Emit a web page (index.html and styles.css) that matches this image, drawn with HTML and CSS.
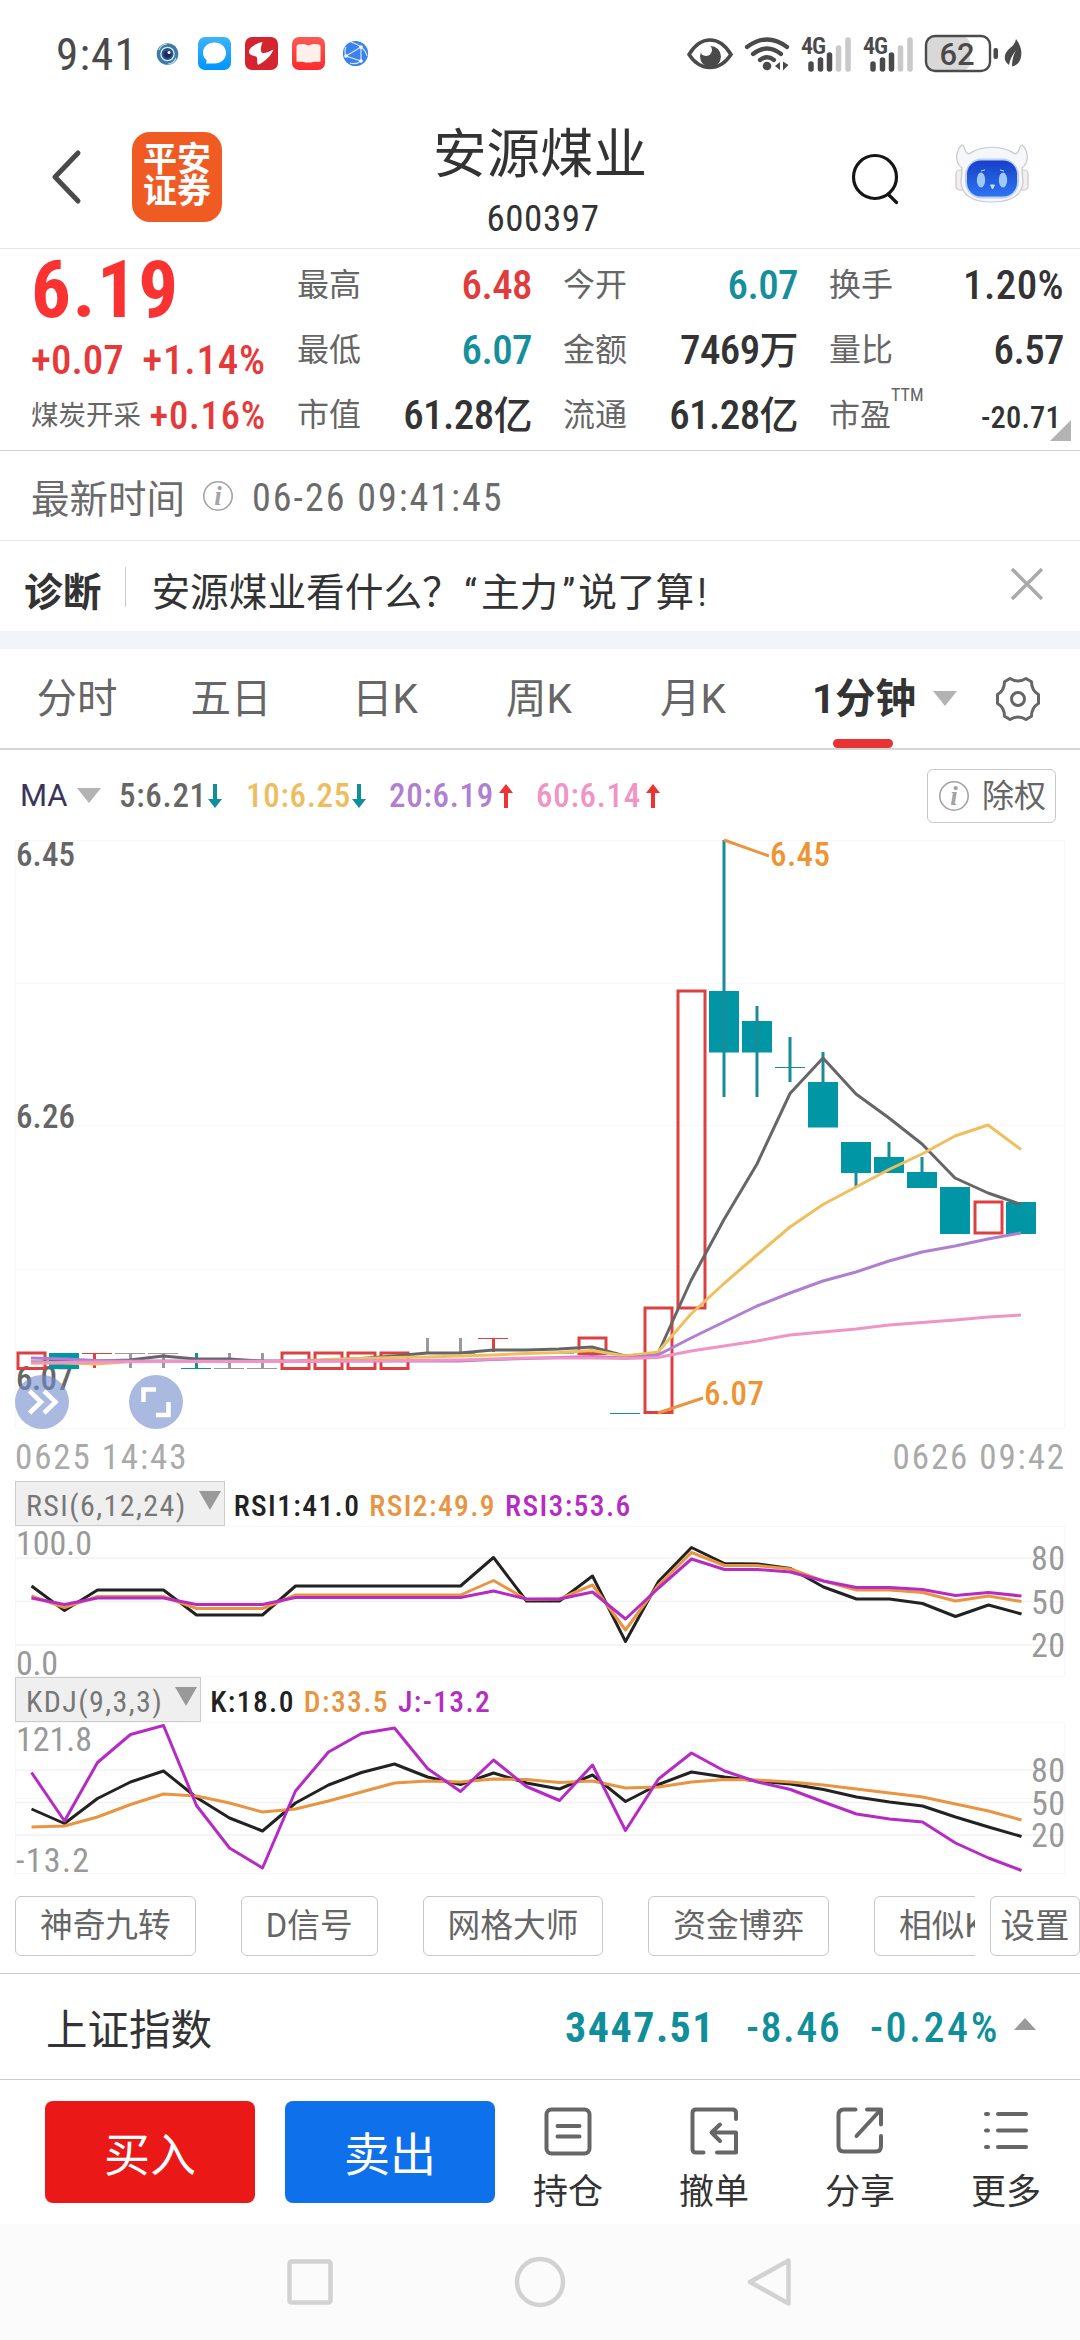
FILE: index.html
```html
<!DOCTYPE html>
<html lang="zh-CN">
<head>
    <meta charset="UTF-8">
    <meta name="viewport" content="width=device-width, initial-scale=1.0">
    <title>安源煤业 600397</title>
    <link rel="stylesheet" href="styles.css">
</head>
<body>
    <div class="status-bar">
        <span class="clock">9:41</span>
        <!-- Notification icons -->
        <svg class="notify-icons" viewBox="150 30 230 48" width="230" height="48">
            <defs>
                <linearGradient id="chatBg" x1="0" y1="0" x2="0" y2="1"><stop offset="0" stop-color="#3db4f8"/><stop offset="1" stop-color="#0095ff"/></linearGradient>
                <linearGradient id="bookBg" x1="0" y1="0" x2="0" y2="1"><stop offset="0" stop-color="#fb5a55"/><stop offset="1" stop-color="#fb2a2c"/></linearGradient>
            </defs>
            <circle cx="167.5" cy="54" r="10.8" fill="#3a7ea6"/>
            <circle cx="167.5" cy="54" r="6.6" fill="#2a4f86" stroke="#d9eaf4" stroke-width="1.3"/>
            <path d="M159 50a9 9 0 0 1 8-6M176 58a9 9 0 0 1-8 6" fill="none" stroke="#bcdcec" stroke-width="1.2"/>
            <circle cx="167.5" cy="54.5" r="3.3" fill="#16285c"/>
            <circle cx="169" cy="52.5" r="1.5" fill="#fff"/>
            <rect x="198" y="37" width="33" height="33" rx="7" fill="url(#chatBg)"/>
            <path d="M214.5 42.5c6.600 0 11.500 4.500 11.500 10.400s-4.900 10.500-11.500 10.500h-8.300l.5-3.200c-2.300-1.900-3.700-4.300-3.700-7.300 0-5.900 4.900-10.400 11.500-10.400z" fill="#fff"/>
            <rect x="245" y="37" width="33" height="33" rx="7" fill="#d3242f"/>
            <path d="M262.5 42c-6 1-13.500 5.500-13.500 10 0 3 4 3.500 7 4.500 2 1 .5 5 2 8.500 6-2.500 13.500-9.500 15.500-15.500-4 2-8 3.800-10.500 3.500-2.500-.5-3-4-.5-11z" fill="#fff"/>
            <rect x="292" y="37" width="33" height="33" rx="7" fill="url(#bookBg)"/>
            <path d="M298 44.5c4-1 7.500-.5 10.500 1 3-1.500 6.500-2 10.500-1l1.500 1.500v15.500c-4 .5-7-.5-9 1h-6c-2-1.500-5-.5-9-1V46z" fill="#fff0ec"/>
            <circle cx="355.5" cy="53.5" r="12.6" fill="#3b82ec"/>
            <path d="M346 56l15-9v14zM361 47q-4-3-10-5M361 61q-5 4-11 2M346 56q-2-5 0-9M361 47q5 4 6 9" fill="none" stroke="#d7e6ff" stroke-width="1.2"/>
            <circle cx="346" cy="56" r="1.8" fill="#fff"/><circle cx="361" cy="47" r="1.8" fill="#fff"/><circle cx="361" cy="61" r="1.8" fill="#fff"/>
        </svg>
        <!-- System icons -->
        <svg class="system-icons" viewBox="685 30 340 48" width="340" height="48">
            <path d="M689 54.5c6-10 13.500-14.500 21-14.500s15 4.500 21 14.500c-6 9-13.500 13-21 13s-15-4-21-13z" fill="none" stroke="#4a4a4a" stroke-width="3.5"/>
            <circle cx="710.5" cy="56.5" r="10.5" fill="#4a4a4a"/>
            <circle cx="706" cy="50" r="6" fill="#fff"/>
            <g fill="none" stroke="#4a4a4a" stroke-width="4.2" stroke-linecap="round">
                <path d="M747 47q20-15 40 0M753 54q14-11 28 0M760 60q7-5.500 14 0"/>
            </g>
            <circle cx="767" cy="66" r="4.300" fill="#4a4a4a"/>
            <path d="M775 66l5-4v8zM783 61.500v9l2-2 3.500-3.500z" fill="#4a4a4a"/>
            <g class="signal">
                <text x="801" y="53.500" textLength="25">4G</text>
                <path d="M811 64v5M820.500 60v9M829.500 55v14"/>
                <path class="weak" d="M838.500 48v21M848 40v29"/>
                <text x="863" y="53.500" textLength="25">4G</text>
                <path d="M873 64v5M882.500 60v9M891.500 55v14"/>
                <path class="weak" d="M900.500 48v21M910 40v29"/>
            </g>
            <rect x="927" y="37" width="43" height="33" rx="7" fill="#d8d8d8"/>
            <rect x="926" y="36" width="64" height="35" rx="9" fill="none" stroke="#4a4a4a" stroke-width="2.4"/>
            <rect x="993.5" y="48" width="4.5" height="11" rx="2" fill="#4a4a4a"/>
            <text class="battery-level" x="957" y="64.5" text-anchor="middle">62</text>
            <path d="M1016 39c5 7 6 12 5 18-1 5-4 8.500-9 9.500 0-6 1-11 4-16-4 5-6 9-7 14.500-6-4-5-11-1-15 3-3 7-5 8-11z" fill="#4a4a4a"/>
        </svg>
    </div>

    <header class="header">
        <svg class="back" width="32" height="56" viewBox="0 0 32 56"><path d="M28 4L5 28l23 24" fill="none" stroke="#4a4a4a" stroke-width="5" stroke-linecap="round" stroke-linejoin="round"/></svg>
        <div class="logo">平安<br>证券</div>
        <div class="title">
            <h1>安源煤业</h1>
            <p>600397</p>
        </div>
        <svg class="search" width="52" height="54" viewBox="0 0 52 54"><g fill="none" stroke="#151515" stroke-width="3.2" stroke-linecap="round"><circle cx="26" cy="25" r="21.5"/><path d="M40 43l7.500 7.500"/></g></svg>
        <svg class="robot" width="76" height="62" viewBox="0 0 76 62">
            <defs><linearGradient id="face" x1="0" y1="0" x2="0" y2="1"><stop offset="0" stop-color="#1740c8"/><stop offset="1" stop-color="#2e74f0"/></linearGradient></defs>
            <g stroke="#c6c8cf" stroke-width="1.2">
                <rect x="2" y="27" width="9" height="20" rx="4" fill="#f6eeee"/><rect x="65" y="27" width="9" height="20" rx="4" fill="#f6eeee"/>
                <path d="M8 2c-6 5-8 17 0 23l-1 14c1 14 12 20 31 20s30-6 31-20l-1-14c8-6 6-18 0-23-3 0-2 8-7 9-12-9-34-9-46 0-5-1-4-9-7-9z" fill="#f6f7fa"/>
            </g>
            <rect x="11" y="15.5" width="54" height="40" rx="17" fill="#b9d0fa"/>
            <rect x="13" y="17.5" width="50" height="36" rx="14" fill="url(#face)"/>
            <ellipse cx="27" cy="37" rx="4.200" ry="7.500" fill="#9fc9fb"/><ellipse cx="49" cy="37" rx="4.200" ry="7.500" fill="#9fc9fb"/>
            <path d="M36.500 42h4l-2 4zM27 28l4-1M46 27l4 1" fill="#c4defc" stroke="#c4defc" stroke-width="1"/>
        </svg>
    </header>

    <section class="quote">
        <div class="quote-main">
            <div class="price">6.19</div>
            <div class="change"><span>+0.07</span><span>+1.14%</span></div>
            <div class="sector"><em>煤炭开采</em><span>+0.16%</span></div>
        </div>
        <div class="cell"><label>最高</label><b class="up">6.48</b></div>
        <div class="cell"><label>今开</label><b class="down">6.07</b></div>
        <div class="cell"><label>换手</label><b class="rate">1.20%</b></div>
        <div class="cell"><label>最低</label><b class="down">6.07</b></div>
        <div class="cell"><label>金额</label><b>7469<small>万</small></b></div>
        <div class="cell"><label>量比</label><b>6.57</b></div>
        <div class="cell"><label>市值</label><b>61.28<small>亿</small></b></div>
        <div class="cell"><label>流通</label><b>61.28<small>亿</small></b></div>
        <div class="cell pe"><label>市盈<sup>TTM</sup></label><b>-20.71</b></div>
        <i class="corner"></i>
    </section>

    <div class="time-row">
        <span class="time-label">最新时间</span>
        <svg class="info" width="32" height="32" viewBox="0 0 32 32"><circle cx="16" cy="16" r="14.2"/><text x="16" y="25" text-anchor="middle">i</text></svg>
        <span class="time-value">06-26 09:41:45</span>
    </div>

    <div class="diagnose">
        <strong>诊断</strong>
        <i class="divider"></i>
        <span>安源煤业看什么？<i class="open">“</i>主力<i class="shut">”</i>说了算<i class="bang">!</i></span>
        <svg class="close" width="36" height="36" viewBox="0 0 36 36"><path d="M3 3l30 30M33 3L3 33" stroke="#aaa" stroke-width="3.5"/></svg>
    </div>

    <nav class="tabs">
        <a>分时</a>
        <a>五日</a>
        <a>日K</a>
        <a>周K</a>
        <a>月K</a>
        <a class="active">1分钟</a>
        <i class="caret"></i>
        <svg class="gear" width="46" height="46" viewBox="0 0 46 46">
            <g fill="none" stroke="#666" stroke-width="3">
                <path stroke-linejoin="round" d="M15 2.500Q23 7.500 31 2.500L36.500 5.700Q36.500 14.500 43.500 18.500V27.500Q36.500 31.500 36.500 40.300L31 43.500Q23 38.500 15 43.500L9.500 40.300Q9.500 31.500 2.500 27.500V18.500Q9.500 14.500 9.500 5.700Z"/>
                <circle cx="23" cy="23" r="6.5"/>
            </g>
        </svg>
    </nav>

    <div class="ma-row">
        <span class="ma-name">MA</span><i class="caret"></i>
        <span class="ma5">5:6.21<svg class="arrow fall" viewBox="0 0 14 24"><path d="M5 0h4v15h5l-7 9-7-9h5z"/></svg></span>
        <span class="ma10">10:6.25<svg class="arrow fall" viewBox="0 0 14 24"><path d="M5 0h4v15h5l-7 9-7-9h5z"/></svg></span>
        <span class="ma20">20:6.19<svg class="arrow rise" viewBox="0 0 14 24"><path d="M5 24h4V9h5L7 0 0 9h5z"/></svg></span>
        <span class="ma60">60:6.14<svg class="arrow rise" viewBox="0 0 14 24"><path d="M5 24h4V9h5L7 0 0 9h5z"/></svg></span>
        <button class="rights">
            <svg class="info" width="32" height="32" viewBox="0 0 32 32"><circle cx="16" cy="16" r="14.2"/><text x="16" y="25" text-anchor="middle">i</text></svg>
            除权
        </button>
    </div>

    <!-- Candles, one every 33px -->
    <svg class="chart" width="1080" height="593" viewBox="0 838 1080 593">
        <path class="grid" d="M15.500 840.500H1064.500V1428.500H15.500zM15 983.500H1064M15 1125.500H1064M15 1269.500H1064"/>
        <g class="axis dark">
            <text x="16" y="866" textLength="59">6.45</text>
            <text x="16" y="1128" textLength="59">6.26</text>
            <text x="16" y="1390" textLength="57">6.07</text>
        </g>
        <g class="flat">
            <path class="s-red" d="M94.500 1353v15"/>
            <path d="M130.500 1353v15M163.500 1353v15M229.500 1353v15M262.500 1353v15M427.500 1338v15M460.500 1338v15"/>
            <path class="hair" d="M115 1353.500h30M148 1353.500h30M214 1368.500h30M247 1368.500h30M412 1353.500h30M445 1353.500h30M544 1353.500h30"/>
            <path class="s-teal" d="M196.500 1353v15"/>
            <path class="hair s-teal" d="M181 1368.500h30M511 1353.500h30M610 1413.500h30"/>
            <path class="s-red" d="M493.500 1338v14"/>
            <path class="hair s-red" d="M82 1353.500h30M478 1338.500h30"/>
        </g>
        <g class="candle-up">
            <rect x="18" y="1353" width="27" height="15.5"/>
            <rect x="282" y="1353" width="27" height="15.5"/>
            <rect x="315" y="1353" width="27" height="15.5"/>
            <rect x="348" y="1353" width="27" height="15.5"/>
            <rect x="381" y="1353" width="27" height="15.5"/>
            <rect x="579" y="1338" width="27" height="15.5"/>
            <rect x="645" y="1308" width="27" height="104.5"/>
            <rect x="678" y="991" width="27" height="317"/>
            <rect x="975" y="1202" width="27" height="31"/>
        </g>
        <g class="candle-down">
            <rect x="49" y="1353" width="30" height="16"/>
            <rect x="709" y="991" width="30" height="61.5"/>
            <rect x="742" y="1021" width="30" height="31.5"/>
            <rect x="808" y="1082" width="30" height="45.5"/>
            <rect x="841" y="1142" width="30" height="31"/>
            <rect x="874" y="1157" width="30" height="16"/>
            <rect x="907" y="1172" width="30" height="16"/>
            <rect x="940" y="1187" width="30" height="47"/>
            <rect x="1006" y="1202" width="30" height="32"/>
            <path d="M724 840V1097M757 1006V1097M790 1037V1082M823 1052V1082M856 1172V1187M889 1142V1157M922 1157V1172"/>
            <path class="hair" d="M775 1067.500h30"/>
        </g>
        <g class="lines" transform="translate(31 0) scale(33 1)">
            <polyline stroke="#666" points="0,1362 1,1362 2,1361 3,1360 4,1356 5,1359 6,1359 7,1361 8,1361.5 9,1360 10,1358.5 11,1356 12,1353 13,1353 14,1350 15,1350 16,1349 17,1347 18,1356 19,1353.5 20,1280.5 21,1219.5 22,1164 23,1093.5 24,1058 25,1094 26,1118 27,1144 28,1178 29,1193 30,1204.5"/>
            <polyline stroke="#efbf5d" points="0,1363 1,1363 2,1364 3,1361.5 7,1361.5 8,1361 9,1359.5 10,1358.5 11,1357.5 12,1357 13,1356 14,1355 15,1353.5 16,1352.5 17,1350.5 18,1356 19,1352 20,1314 21,1283.5 22,1255 23,1227 24,1204.5 25,1187 26,1169.5 27,1154 28,1136 29,1125 30,1149.5"/>
            <polyline stroke="#b07fd2" points="0,1358 1,1359 2,1360.5 3,1361 13,1361 14,1359.5 15,1358.5 16,1357.5 17,1356.5 18,1358 19,1355 20,1338 21,1322 22,1306 23,1293 24,1281 25,1272 26,1261 27,1252 28,1246 29,1239 30,1233"/>
            <polyline stroke="#ef94c5" points="0,1363 2,1362 4,1361.5 8,1361.5 13,1360 14,1359 15,1358 16,1358 17,1358 18,1358.5 19,1357.5 20,1351 21,1346 22,1341 23,1335 24,1332 25,1329 26,1325 27,1322.5 28,1320 29,1317 30,1315"/>
        </g>
        <g class="callout">
            <path d="M724 840l45 16M658 1413l45-15"/>
            <text x="770" y="866" textLength="60">6.45</text>
            <text x="704" y="1405" textLength="60">6.07</text>
        </g>
        <g class="float-btn">
            <circle cx="42" cy="1402" r="27"/>
            <path d="M29.500 1391l11.500 11-11.500 11M44 1391l11.500 11-11.500 11"/>
            <circle cx="156" cy="1402" r="27"/>
            <path d="M156 1389.500h-12.500v12.500M156 1415h12.500v-13"/>
        </g>
    </svg>
    <div class="dates"><span>0625 14:43</span><span>0626 09:42</span></div>

    <div class="indicator-head">
        <button class="picker">RSI(6,12,24)<i></i></button>
        <span class="c-black">RSI1:41.0</span>
        <span class="c-orange">RSI2:49.9</span>
        <span class="c-purple">RSI3:53.6</span>
    </div>
    <svg class="chart" width="1080" height="151" viewBox="0 1526 1080 151">
        <path class="grid" d="M15.500 1526.500H1064.500V1676.500H15.500z"/>
        <path class="grid strong" d="M15 1558H1064M15 1601.500H1064M15 1645H1064"/>
        <g class="axis">
            <text x="16" y="1555" textLength="76">100.0</text>
            <text x="16" y="1675" textLength="42">0.0</text>
            <text x="1031" y="1570" textLength="34">80</text>
            <text x="1031" y="1613.500" textLength="34">50</text>
            <text x="1031" y="1657" textLength="34">20</text>
        </g>
        <g class="lines" transform="translate(31.5 0) scale(33 1)">
            <polyline stroke="#222" points="0,1586 1,1610.5 2,1590 4,1590 5,1615 7,1615 8,1586 13,1586 14,1557.5 15,1601 16,1601 17,1576 18,1641.5 19,1581.5 20,1547.5 21,1563.5 22,1564 23,1568.5 24,1587 25,1599 26,1599 27,1603.5 28,1616.5 29,1605 30,1614"/>
            <polyline stroke="#e99440" points="0,1596 1,1607.5 2,1596.5 4,1596.5 5,1608.5 7,1608.5 8,1595 13,1595 14,1580.5 15,1599.5 16,1599 17,1585 18,1630 19,1585 20,1552.5 21,1565.5 22,1565.5 23,1569 24,1581 25,1590 26,1590 27,1592.5 28,1601 29,1596 30,1601.5"/>
            <polyline stroke="#b52bc4" points="0,1598 1,1604.5 2,1598 4,1598 5,1604.5 7,1604.5 8,1597.5 13,1597.5 14,1591 15,1599 16,1599 17,1592 18,1619 19,1588 20,1559 21,1569.5 22,1569.5 23,1572 24,1581 25,1587.5 26,1587.5 27,1589.5 28,1595.5 29,1592.5 30,1596"/>
        </g>
    </svg>

    <div class="indicator-head">
        <button class="picker">KDJ(9,3,3)<i></i></button>
        <span class="c-black">K:18.0</span>
        <span class="c-orange">D:33.5</span>
        <span class="c-purple">J:-13.2</span>
    </div>
    <svg class="chart" width="1080" height="153" viewBox="0 1722 1080 153">
        <path class="grid" d="M15.500 1722.500H1064.500V1873.500H15.500zM15 1798.500H1064"/>
        <path class="grid strong" d="M15 1770H1064M15 1802.500H1064M15 1835H1064"/>
        <g class="axis">
            <text x="16" y="1751" textLength="76">121.8</text>
            <text x="16" y="1871.500" textLength="73">-13.2</text>
            <text x="1031" y="1782" textLength="34">80</text>
            <text x="1031" y="1815" textLength="34">50</text>
            <text x="1031" y="1847" textLength="34">20</text>
        </g>
        <g class="lines" transform="translate(31.5 0) scale(33 1)">
            <polyline stroke="#222" points="0,1809 1,1823.5 2,1798.5 3,1782 4,1771 5,1797.5 6,1818 7,1831 8,1803 9,1785 10,1772.5 11,1764 12,1777 13,1784.5 14,1773 15,1783 16,1789 17,1775 18,1801.5 19,1784.5 20,1772 21,1777 22,1781 23,1784 24,1789.5 25,1797 26,1802 27,1806 28,1817 29,1827 30,1836.5"/>
            <polyline stroke="#e99440" points="0,1827 1,1826 2,1817 3,1804.5 4,1794 5,1796 6,1803 7,1812 8,1809 9,1801 10,1792 11,1783 12,1781 13,1782 14,1779 15,1779.5 16,1782.5 17,1781 18,1788 19,1787 20,1782 21,1779.5 22,1780 23,1782 24,1785 25,1789 26,1793 27,1797 28,1804 29,1811 30,1820"/>
            <polyline stroke="#b52bc4" points="0,1772.5 1,1821 2,1762.5 3,1734.5 4,1725.5 5,1805.5 6,1848 7,1868 8,1791 9,1752 10,1733.5 11,1728 12,1768.5 13,1791.5 14,1760 15,1786.5 16,1800.5 17,1765 18,1830.5 19,1779 20,1753 21,1771 22,1782 23,1789.5 24,1802 25,1814 26,1819 27,1822 28,1843 29,1858 30,1870.5"/>
        </g>
    </svg>

    <div class="tools">
        <div class="tools-scroll">
            <button>神奇九转</button>
            <button>D信号</button>
            <button>网格大师</button>
            <button>资金博弈</button>
            <button>相似K线</button>
        </div>
        <button class="settings">设置</button>
    </div>

    <div class="index-row">
        <span class="index-name">上证指数</span>
        <b>3447.51</b>
        <span class="index-diff">-8.46</span>
        <span class="index-rate">-0.24%</span>
        <i class="caret-up"></i>
    </div>

    <footer class="actions">
        <button class="buy">买入</button>
        <button class="sell">卖出</button>
        <a>
            <svg width="52" height="52" viewBox="0 0 52 52"><rect x="4.500" y="4.500" width="43" height="44" rx="5"/><path d="M15.500 21h22M15.500 31.500h22"/></svg>
            持仓
        </a>
        <a>
            <svg width="52" height="52" viewBox="0 0 52 52"><path d="M48 14V8q0-3.500-3.500-3.500H8Q4.500 4.500 4.500 8v36q0 3.500 3.500 3.500h7.500M29 47.500h19V27.500H24M32 19.500l-8.500 8 8.500 8.500"/></svg>
            撤单
        </a>
        <a>
            <svg width="52" height="52" viewBox="0 0 52 52"><path d="M21.500 4.500H10Q4.500 4.500 4.500 10v31q0 5.500 5.500 5.500h32q5 0 5-5.500V31M33 4.500h14v15M46 5.500L22.500 31"/></svg>
            分享
        </a>
        <a>
            <svg width="52" height="52" viewBox="0 0 52 52"><path d="M6 9h2M18 9h28M6 25.500h2M18 25.500h28M6 42h2M18 42h28"/></svg>
            更多
        </a>
    </footer>

    <div class="nav-bar">
        <svg width="56" height="56" viewBox="0 0 56 56"><rect x="7.500" y="7.500" width="41" height="41" rx="2"/></svg>
        <svg width="56" height="56" viewBox="0 0 56 56"><circle cx="28" cy="28" r="23"/></svg>
        <svg width="56" height="56" viewBox="0 0 56 56"><path d="M46.500 6.500v43L8 28z"/></svg>
    </div>
</body>
</html>
```
FILE: styles.css
```css
* {
    box-sizing: border-box;
}
body {
    margin: 0;
    width: 1080px;
    background: #fff;
    color: #333;
    font-family: "Roboto Condensed", "Noto Sans CJK SC", sans-serif;
}
h1, p {
    margin: 0;
    font-weight: 400;
}
i, em {
    font-style: normal;
}
svg {
    display: block;
    flex: none;
    overflow: visible;
}
button {
    font-family: inherit;
    background: #fff;
    padding: 0;
}

/* Status bar */
.status-bar {
    height: 100px;
    display: flex;
    align-items: flex-start;
    padding: 30px 55px 0 56px;
}
.clock {
    width: 94px;
    font-size: 45px;
    line-height: 50px;
    letter-spacing: 1.2px;
    color: #4a4a4a;
}
.system-icons {
    margin-left: auto;
}
.signal text {
    font-size: 24px;
    font-weight: 600;
    fill: #4a4a4a;
}
.signal path {
    stroke: #4a4a4a;
    stroke-width: 5.5;
    stroke-linecap: round;
}
.signal .weak {
    stroke: #c9c9c9;
}
.battery-level {
    font-family: Roboto, sans-serif;
    font-size: 31px;
    font-weight: 500;
    fill: #4a4a4a;
}

/* Header */
.header {
    height: 149px;
    display: flex;
    align-items: flex-start;
    border-bottom: 1px solid #e6e6e6;
}
.back {
    margin: 49px 0 0 50px;
}
.logo {
    margin: 32px 0 0 50px;
    width: 90px;
    height: 90px;
    padding-top: 11px;
    border-radius: 18px;
    background: #f05b23;
    color: #fff;
    font-size: 34px;
    font-weight: 700;
    line-height: 32px;
    text-align: center;
}
.title {
    width: 424px;
    margin: 22px 0 0 106px;
    text-align: center;
}
.title h1 {
    font-size: 53.5px;
    line-height: 66px;
}
.title p {
    margin-top: 7px;
    padding-left: 6px;
    font-size: 37px;
    line-height: 48px;
    letter-spacing: 0.6px;
}
.search {
    margin: 52px 0 0 97px;
}
.robot {
    margin: 43px 0 0 53px;
}

/* Quote */
.quote {
    position: relative;
    height: 202px;
    display: grid;
    grid-template-columns: 235px 235px 235px 235px;
    grid-template-rows: 65px 65px 65px;
    column-gap: 31px;
    padding: 4px 0 0 31px;
    border-bottom: 1px solid #cfcfcf;
}
.quote-main {
    grid-row: 1 / 4;
    color: #e63a3a;
    font-weight: 500;
}
.price {
    font-size: 79px;
    font-weight: 700;
    line-height: 75px;
    letter-spacing: 1.5px;
    color: #fa3232;
}
.change, .sector {
    display: flex;
    justify-content: space-between;
}
.change {
    font-size: 41px;
    line-height: 64px;
}
.change span:last-child {
    letter-spacing: 0.8px;
}
.sector {
    font-size: 38.5px;
    line-height: 48px;
}
.sector em {
    font-size: 27.5px;
    font-weight: 400;
    color: #666;
}
.sector span {
    letter-spacing: 0.8px;
}
.cell {
    display: flex;
    justify-content: space-between;
    line-height: 65px;
}
.cell label {
    font-size: 32px;
    color: #666;
}
.cell b {
    font-size: 41px;
    font-weight: 500;
    letter-spacing: -0.6px;
}
.cell small {
    font-size: 39px;
}
.cell .rate {
    letter-spacing: 0.4px;
}
.cell .up {
    color: #e03c3c;
}
.cell .down {
    color: #148f9b;
}
.cell sup {
    font-size: 18px;
    line-height: 0;
    vertical-align: 25px;
}
.cell.pe label {
    font-size: 31px;
}
.cell.pe b {
    padding: 2px 3px 0 0;
    font-size: 30.5px;
    letter-spacing: 0.2px;
}
.corner {
    position: absolute;
    right: 9px;
    bottom: 9px;
    border-left: 21px solid transparent;
    border-bottom: 21px solid #b3b3b3;
}

/* Latest time */
.time-row {
    height: 90px;
    display: flex;
    align-items: center;
    padding-left: 31px;
    border-bottom: 1px solid #e8e8e8;
    color: #6b6b6b;
}
.time-label {
    font-size: 38.5px;
}
.info circle {
    fill: none;
    stroke: #a3a3a3;
    stroke-width: 1.6;
}
.info text {
    font: italic 700 27px "Liberation Serif", serif;
    fill: #a3a3a3;
}
.time-row .info {
    margin-left: 17px;
}
.time-value {
    margin: 4px 0 0 18px;
    font-size: 38px;
    letter-spacing: 2px;
}

/* Diagnose banner */
.diagnose {
    height: 108px;
    display: flex;
    align-items: center;
    padding: 11px 35px 5px 24px;
    border-bottom: 18px solid #f3f4f9;
    font-size: 38.7px;
}
.divider {
    width: 1px;
    height: 40px;
    margin: -4px 25px 0 24px;
    background: #ccc;
}
.diagnose .open, .diagnose .shut, .diagnose .bang {
    display: inline-block;
    width: 20px;
}
.diagnose .open {
    text-align: right;
    padding-right: 4px;
}
.diagnose .shut {
    padding-left: 4px;
}
.diagnose .bang {
    padding-left: 3px;
}
.close {
    margin: -10px 0 0 auto;
}

/* Period tabs */
.tabs {
    height: 101px;
    display: flex;
    align-items: center;
    border-bottom: 2px solid #d4d4d4;
    font-family: Roboto, "Noto Sans CJK SC", sans-serif;
    font-size: 40.5px;
    color: #666;
}
.tabs a {
    width: 154px;
    height: 99px;
    line-height: 101px;
    text-align: center;
}
.tabs .active {
    position: relative;
    width: 163px;
    padding-left: 25px;
    font-weight: 700;
    color: #333;
}
.tabs .active::after {
    content: "";
    position: absolute;
    left: 63px;
    bottom: 0;
    width: 60px;
    height: 9px;
    border-radius: 5px;
    background: #e93333;
}
.caret {
    border: 12px solid transparent;
    border-top: 15px solid #b3b3b3;
    border-bottom: 0;
}
.gear {
    margin-left: 38px;
}

/* Moving averages */
.ma-row {
    height: 88px;
    display: flex;
    align-items: center;
    padding: 3px 24px 0 20px;
    font-size: 33px;
    font-weight: 500;
    letter-spacing: 0.7px;
}
.ma-row > span {
    display: flex;
    align-items: center;
}
.ma-name {
    width: 57px;
    font-family: Roboto, sans-serif;
    font-size: 31px;
    font-weight: 400;
    letter-spacing: 0;
    color: #3a3558;
}
.ma5 {
    width: 127px;
    margin-left: 18px;
    color: #666;
}
.ma10 {
    width: 143px;
    color: #edbd60;
}
.ma20 {
    width: 147px;
    color: #b07fd2;
}
.ma60 {
    color: #ef94c5;
}
.arrow {
    width: 14px;
    height: 24px;
    margin-left: 1px;
}
.fall {
    fill: #108f9a;
}
.rise {
    margin-left: 5px;
    fill: #e33;
}
.rights {
    display: flex;
    align-items: center;
    width: 129px;
    height: 54px;
    margin-left: auto;
    padding: 0 9px 0 10px;
    justify-content: space-between;
    border: 1px solid #c8c8c8;
    border-radius: 6px;
    font-size: 32px;
    line-height: 44px;
    letter-spacing: 0;
    color: #666;
}

/* Charts */
.grid {
    fill: none;
    stroke: #f7f7f7;
}
.grid.strong {
    stroke: #f2f2f2;
    stroke-width: 1.5;
}
.axis text {
    font-size: 34px;
    fill: #999;
}
.axis.dark text {
    font-size: 33px;
    font-weight: 500;
    fill: #666;
}
.lines polyline {
    fill: none;
    stroke-width: 3;
    stroke-linejoin: round;
    vector-effect: non-scaling-stroke;
}
.candle-up rect {
    fill: none;
    stroke: #dd4040;
    stroke-width: 3;
}
.candle-down rect {
    fill: #0096a5;
}
.candle-down path {
    stroke: #1a8c99;
    stroke-width: 3;
}
.flat path {
    stroke: #99999f;
    stroke-width: 3;
}
.flat .s-red {
    stroke: #dd4040;
}
.flat .s-teal {
    stroke: #148f9b;
}
.flat .hair, .candle-down .hair {
    stroke-width: 1;
}
.callout path {
    stroke: #e99440;
    stroke-width: 3;
}
.callout text {
    font-size: 33px;
    font-weight: 500;
    fill: #ee9434;
}
.float-btn circle {
    fill: rgba(112, 138, 202, 0.6);
}
.float-btn path {
    fill: none;
    stroke: #fff;
    stroke-width: 4.5;
}
.dates {
    height: 50px;
    display: flex;
    justify-content: space-between;
    padding: 0 14px 0 15px;
    font-size: 35px;
    line-height: 54px;
    letter-spacing: 1.9px;
    color: #aaa;
}

/* Indicators */
.indicator-head {
    height: 45px;
    display: flex;
    align-items: center;
    padding-left: 15px;
    font-size: 29.5px;
    font-weight: 500;
    letter-spacing: 1.4px;
}
.indicator-head span {
    margin-left: 9px;
    padding-top: 4px;
}
.picker {
    display: flex;
    align-items: center;
    height: 45px;
    padding: 3px 3px 0 10px;
    border: 1px solid #ccc;
    background: #efefef;
    color: #777;
    font-size: 30px;
    letter-spacing: 1.4px;
}
.picker i {
    margin: -9px 0 0 12px;
    border: 11px solid transparent;
    border-top: 19px solid #999;
    border-bottom: 0;
}
.c-black {
    color: #222;
}
.c-orange {
    color: #e99440;
}
.c-purple {
    color: #b52bc4;
}

/* Tool buttons */
.tools {
    height: 98px;
    display: flex;
    padding: 21px 0 0 15px;
}
.tools-scroll {
    width: 960px;
    display: flex;
    gap: 45px;
    overflow: hidden;
}
.tools button {
    flex: none;
    height: 60px;
    padding: 0 24px;
    border: 1px solid #c8c8c8;
    border-radius: 6px;
    font-family: Roboto, "Noto Sans CJK SC", sans-serif;
    font-size: 32.7px;
    line-height: 46px;
    color: #666;
}
.tools .settings {
    width: 90px;
    margin-left: 15px;
    padding: 0;
    font-size: 34.5px;
}

/* Index */
.index-row {
    height: 106px;
    display: flex;
    align-items: center;
    padding: 2px 0 0 46px;
    border-top: 1px solid #ccc;
    font-size: 42px;
    font-weight: 500;
    letter-spacing: 1.5px;
    color: #108f9a;
}
.index-name {
    width: 519px;
    margin-top: -2px;
    font-size: 41.5px;
    font-weight: 400;
    letter-spacing: 0;
    color: #333;
}
.index-row b {
    width: 181px;
    font-weight: 700;
}
.index-diff {
    width: 124px;
}
.index-rate {
    width: 144px;
    letter-spacing: 2.6px;
}
.caret-up {
    margin-top: -7px;
    border: 11px solid transparent;
    border-bottom: 12px solid #999;
    border-top: 0;
}

/* Bottom actions */
.actions {
    height: 145px;
    display: flex;
    padding: 21px 0 0 45px;
    border-top: 1px solid #ccc;
}
.actions button {
    width: 210px;
    height: 102px;
    padding-bottom: 3px;
    border: none;
    border-radius: 8px;
    color: #fff;
    font-size: 46px;
}
.actions .buy {
    background: #eb1818;
}
.actions .sell {
    margin-left: 30px;
    background: #0f70ec;
}
.actions a {
    width: 146px;
    display: flex;
    flex-direction: column;
    align-items: center;
    gap: 10px;
    padding-top: 4px;
    font-size: 35px;
    line-height: 52px;
}
.actions a svg {
    fill: none;
    stroke: #666;
    stroke-width: 4;
    stroke-linecap: round;
    stroke-linejoin: round;
}

/* System navigation */
.nav-bar {
    height: 116px;
    display: flex;
    justify-content: center;
    align-items: center;
    gap: 174px;
    background: #fbfbfb;
}
.nav-bar svg {
    fill: none;
    stroke: #d2d2d2;
    stroke-width: 4.5;
    stroke-linejoin: round;
}
```
